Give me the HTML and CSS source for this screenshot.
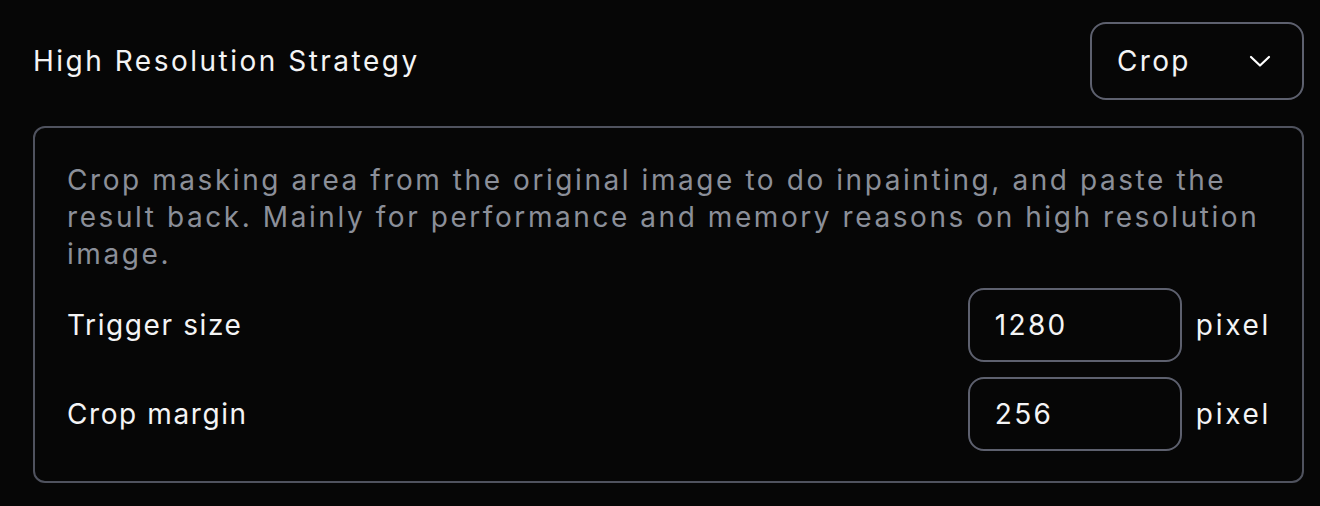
FILE: index.html
```html
<!DOCTYPE html>
<html>
<head>
<meta charset="utf-8">
<link rel="stylesheet" href="styles.css">
</head>
<body>
<div class="page">
  <div class="header">
    <div class="title">High Resolution Strategy</div>
    <div class="select">
      <span>Crop</span>
      <svg class="chev" width="22" height="14" viewBox="0 0 22 14"><path d="M2 3 L11 11.5 L20 3" fill="none" stroke="#fff" stroke-width="2.2" stroke-linecap="round" stroke-linejoin="round"/></svg>
    </div>
  </div>
  <div class="panel">
    <p class="desc">Crop masking area from the original image to do inpainting, and paste the result back. Mainly for performance and memory reasons on high resolution image.</p>
    <div class="row">
      <div class="label">Trigger size</div>
      <div class="field"><div class="input">1280</div><span class="unit">pixel</span></div>
    </div>
    <div class="row">
      <div class="label">Crop margin</div>
      <div class="field"><div class="input">256</div><span class="unit">pixel</span></div>
    </div>
  </div>
</div>
</body>
</html>
```
FILE: styles.css
```css
* { box-sizing: border-box; }
html, body { margin: 0; padding: 0; background: #060606; }
body {
  font-family: "Inter", "Open Sans", sans-serif;
  color: #f4f4f5;
  width: 1320px;
  height: 506px;
  overflow: hidden;
  font-size: 28px;
  letter-spacing: 2.3px;
}
.page {
  padding: 22px 16px 0 33px;
  display: flex;
  flex-direction: column;
  gap: 26px;
}
.header {
  display: flex;
  align-items: center;
  justify-content: space-between;
  height: 78px;
}
.title {
  font-size: 28px;
  letter-spacing: 2.5px;
}
.select {
  width: 214px;
  height: 78px;
  border: 2px solid #5d606e;
  border-radius: 16px;
  display: flex;
  align-items: center;
  justify-content: space-between;
  padding: 0 31px 0 25px;
}
.chev { display: block; }
.panel {
  border: 2px solid #4f525e;
  border-radius: 12px;
  padding: 34px 31px 31px 32px;
  display: flex;
  flex-direction: column;
  gap: 15px;
  height: 357px;
}
.desc {
  margin: 0 -20px 0 0;
  color: #8b8f99;
  line-height: 37px;
  letter-spacing: 2.57px;
}
.row {
  display: flex;
  align-items: center;
  justify-content: space-between;
  height: 74px;
}
.label { letter-spacing: 1.6px; }
.field {
  display: flex;
  align-items: center;
  gap: 14px;
}
.input {
  width: 214px;
  height: 74px;
  border: 2px solid #5d606e;
  border-radius: 16px;
  padding: 0 25px;
  display: flex;
  align-items: center;
}
.unit { letter-spacing: 2.7px; }
```
